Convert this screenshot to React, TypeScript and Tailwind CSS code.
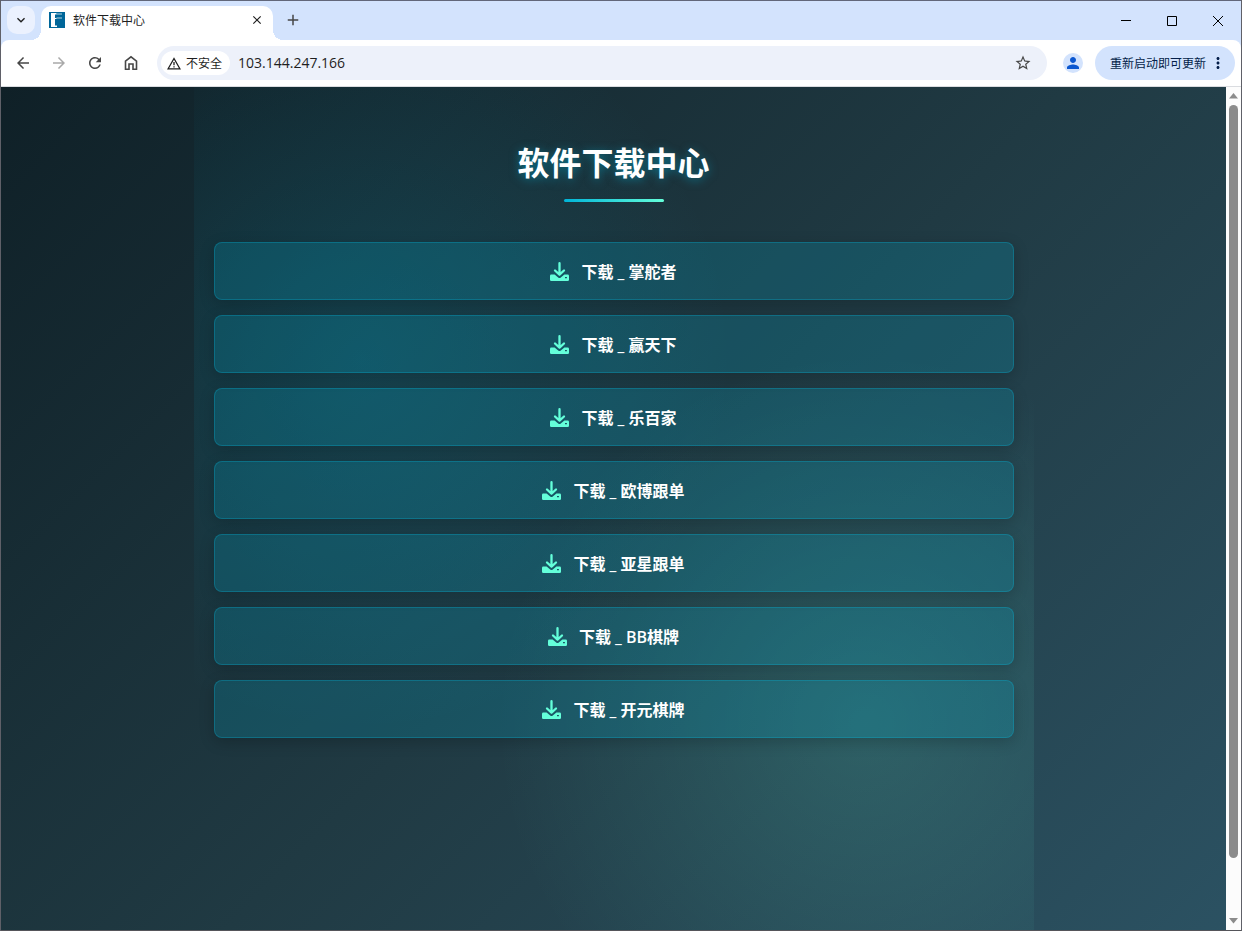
import React from 'react';
import {
  MdArrowBack,
  MdArrowForward,
  MdRefresh,
  MdStarBorder,
  MdPerson,
  MdMoreVert,
  MdAdd,
  MdClose,
  MdKeyboardArrowDown,
} from 'react-icons/md';

const downloads = ['掌舵者', '赢天下', '乐百家', '欧博跟单', '亚星跟单', 'BB棋牌', '开元棋牌'];

interface IconButtonProps {
  label: string;
  className?: string;
  children: React.ReactNode;
}

function IconButton({ label, className = '', children }: IconButtonProps) {
  return (
    <button type="button" aria-label={label} className={`flex items-center justify-center shrink-0 ${className}`}>
      {children}
    </button>
  );
}

function DownloadIcon() {
  return (
    <svg width="19" height="19" viewBox="0 0 19 19" fill="none" className="shrink-0 text-[#64ffda]">
      <path
        fill="currentColor"
        fillRule="evenodd"
        d="M1.300 12.600h3.300l3.900 3.100q1 .7 2 0l3.900-3.100h3.300q1.300 0 1.300 1.300v3.800q0 1.300-1.300 1.300H1.300Q0 19 0 17.700v-3.800q0-1.300 1.300-1.300zM15 15.100v1.100h1.900v-1.100z"
      />
      <path stroke="currentColor" strokeWidth="2.300" strokeLinecap="round" strokeLinejoin="round" d="M9.500 1.200v11.500M5 8.500l4.500 4.200L14 8.500" />
    </svg>
  );
}

function HomeIcon() {
  return (
    <svg width="14" height="16" viewBox="0 0 14 16" fill="none" stroke="currentColor" strokeWidth="1.600">
      <path d="M1.500 6.200L7 1.800l5.500 4.400v8H9V9H5v5.200H1.500z" />
    </svg>
  );
}

function WarningIcon() {
  return (
    <svg width="14" height="13" viewBox="0 0 14 13" fill="none" stroke="currentColor" strokeWidth="1.300">
      <path d="M7 1.500L12.900 11.800H1.100z" />
      <path d="M7 5v3.300M7 9.200v1.400" />
    </svg>
  );
}

function TabStrip() {
  return (
    <div className="flex h-10 bg-[#d3e3fd] border-t border-[#62677a]">
      <div className="pl-1.5 pt-[5px] pr-1.5">
        <IconButton label="搜索标签页" className="size-7 rounded-[10px] bg-[#ebf1fe] text-[#1f1f1f]">
          <MdKeyboardArrowDown size={16} />
        </IconButton>
      </div>
      <div className="relative mt-[5px] flex w-[232px] items-center rounded-t-[10px] bg-white px-2 pb-1.5">
        {/* curved feet of the active tab */}
        <span className="absolute bottom-0 right-full size-2.5 bg-[radial-gradient(circle_at_0_0,transparent_10px,white_10px)]" />
        <span className="absolute bottom-0 left-full size-2.5 bg-[radial-gradient(circle_at_100%_0,transparent_10px,white_10px)]" />
        <svg width="16" height="16" viewBox="0 0 16 16" className="shrink-0">
          <rect width="16" height="16" fill="#006699" />
          <path d="M2 1h5.500v1.500H6V6h1.500v1H6v6.500h2V15H2z" fill="#fff" />
          <path d="M7.500 1.500H13v1H7.500zM7.500 5.500H13v1H7.500z" fill="#b5d3e2" />
        </svg>
        <span className="ml-2 flex-1 pt-0.5 text-xs text-[#1f1f1f]">软件下载中心</span>
        <IconButton label="关闭标签页" className="size-4 text-[#1f1f1f]">
          <MdClose size={14} />
        </IconButton>
      </div>
      <IconButton label="新标签页" className="ml-2.5 size-5 mt-[9px] text-[#474747]">
        <MdAdd size={18} />
      </IconButton>
      <div className="ml-auto flex text-black">
        <IconButton label="最小化" className="w-[46px]">
          <svg width="10" height="10" stroke="currentColor"><path d="M0 4.500h10" /></svg>
        </IconButton>
        <IconButton label="最大化" className="w-[46px]">
          <svg width="10" height="10" stroke="currentColor" fill="none"><path d="M.5.5h9v9h-9z" /></svg>
        </IconButton>
        <IconButton label="关闭" className="w-[46px]">
          <svg width="10" height="10" stroke="currentColor"><path d="M0 0l10 10M10 0L0 10" /></svg>
        </IconButton>
      </div>
    </div>
  );
}

function Toolbar() {
  return (
    <div className="bg-[#d3e3fd]">
      <div className="flex h-[47px] items-center rounded-t-lg border-b border-[#dadce0] bg-white pl-1 pr-1.5 text-[#474747]">
        <IconButton label="后退" className="size-9"><MdArrowBack size={18} /></IconButton>
        <IconButton label="前进" className="size-9 text-[#a9a9a9]"><MdArrowForward size={18} /></IconButton>
        <IconButton label="重新加载" className="size-9"><MdRefresh size={18} /></IconButton>
        <IconButton label="主页" className="size-9"><HomeIcon /></IconButton>
        <div className="ml-2 flex h-[34px] flex-1 items-center rounded-full bg-[#edf1fa] pl-1 pr-[15px]">
          <button type="button" className="flex h-6 shrink-0 items-center gap-[5px] rounded-full bg-white pl-1.5 pr-2 text-xs text-[#1f1f1f]">
            <WarningIcon />
            <span className="pt-0.5">不安全</span>
          </button>
          <input
            aria-label="地址"
            defaultValue="103.144.247.166"
            className="ml-2 min-w-0 flex-1 bg-transparent text-sm text-[#1f1f1f] outline-none"
          />
          <IconButton label="收藏" className="size-[18px]"><MdStarBorder size={18} /></IconButton>
        </div>
        <IconButton label="用户" className="ml-4 size-5 rounded-full bg-[#d3e3fd] text-[#0b57d0]"><MdPerson size={18} /></IconButton>
        <button type="button" className="ml-3 flex h-[34px] shrink-0 items-center gap-[3px] rounded-full bg-[#d3e3fd] pl-[15px] pr-2 text-xs text-[#041e49]">
          <span className="pt-0.5">重新启动即可更新</span>
          <MdMoreVert size={18} />
        </button>
      </div>
    </div>
  );
}

function Scrollbar() {
  return (
    <div className="flex w-[15px] shrink-0 flex-col items-center bg-[#fcfcfc] py-1.5" aria-hidden="true">
      <svg width="9" height="6" fill="#8b8b8b"><path d="M4.500 0L9 5.500H0z" /></svg>
      <div className="my-1.5 flex w-[9px] flex-1 flex-col">
        <div className="grow-[753] rounded-full bg-[#8b8b8b]" />
        <div className="grow-[54]" />
      </div>
      <svg width="9" height="6" fill="#8b8b8b"><path d="M4.500 5.500L0 0h9z" /></svg>
    </div>
  );
}

function DownloadPage() {
  return (
    <main className="flex-1 overflow-hidden">
      <div className="min-h-[910px] bg-[linear-gradient(135deg,#0f2027,#203a43,#2c5364)]">
        <div className="mx-auto min-h-[910px] max-w-[840px] bg-[radial-gradient(circle_at_20%_30%,rgba(0,180,216,0.15)_0%,transparent_40%),radial-gradient(circle_at_80%_70%,rgba(100,255,218,0.15)_0%,transparent_40%)] px-5 pt-[52px]">
          <h1 className="text-center text-[32px] leading-[48px] font-bold text-white [text-shadow:0_2px_10px_rgba(0,180,216,0.5)]">
            软件下载中心
          </h1>
          <div className="mx-auto mt-3 h-[3px] w-[100px] rounded-sm bg-[linear-gradient(90deg,#00b4d8,#64ffda)]" />
          <div className="mt-10 flex flex-col gap-[15px]">
            {downloads.map((name) => (
              <a
                key={name}
                href="#"
                className="flex h-[58px] items-center justify-center gap-3 rounded-lg border border-[rgba(0,180,216,0.3)] bg-[rgba(0,180,216,0.2)] font-semibold text-white shadow-[0_4px_15px_rgba(0,0,0,0.2)]"
              >
                <DownloadIcon />
                <span className="pt-0.5">下载 _ {name}</span>
              </a>
            ))}
          </div>
        </div>
      </div>
    </main>
  );
}

export default function App() {
  return (
    <div className="flex h-screen flex-col overflow-hidden border-x border-[#5f6068] font-['Open_Sans','Noto_Sans_CJK_SC',sans-serif]">
      <TabStrip />
      <Toolbar />
      <div className="flex min-h-0 flex-1 border-b border-[#55555a]">
        <DownloadPage />
        <Scrollbar />
      </div>
    </div>
  );
}
